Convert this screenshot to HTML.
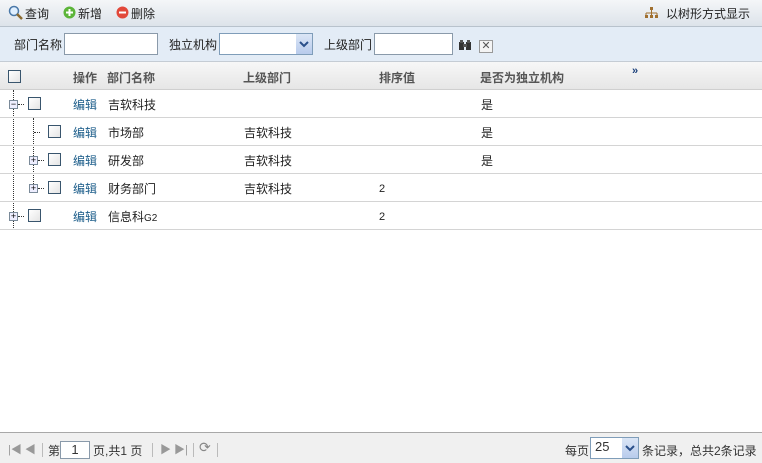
<!DOCTYPE html>
<html><head><meta charset="utf-8"><style>
*{margin:0;padding:0;box-sizing:border-box}
body{width:762px;height:463px;overflow:hidden;background:#fff;font:12px "Liberation Sans","Noto Sans CJK SC",sans-serif;color:#222;position:relative}
.a{position:absolute}
.tb{left:0;top:0;width:762px;height:27px;background:linear-gradient(#f4f6f8,#dde3ea);border-bottom:1px solid #b8c2cc}
.fl{left:0;top:27px;width:762px;height:35px;background:#e3ecf6;border-bottom:1px solid #c5ccd4}
.hd{left:0;top:62px;width:762px;height:28px;background:linear-gradient(#f7f7f7,#e6e6e6);border-bottom:1px solid #cfcfcf;font-weight:bold;color:#555}
.row{left:0;width:762px;height:28px;border-bottom:1px solid #d4d4d4}
.cb{position:absolute;width:13px;height:13px;border:1px solid #39556d;background:linear-gradient(135deg,#fff,#e4e4e4)}
.ed{color:#1c5d8a}
.inp{position:absolute;height:22px;border:1px solid #8a9aaa;background:#fff}
.ft{left:0;top:432px;width:762px;height:31px;background:#f0f0f0;border-top:1px solid #a8a8a8;color:#333}
.vd{position:absolute;border-left:1px dotted #333}
.hd2{position:absolute;border-top:1px dotted #333;width:6px}
.pm{position:absolute;width:9px;height:9px;border:1px solid #7a8a99;background:#eef;font-size:9px;line-height:7px;text-align:center;color:#000}
.sep{position:absolute;top:10px;width:1px;height:14px;background:#bbb}
.num{font-size:11px;line-height:14px}
.sel{position:absolute;right:0;top:0;width:16px;height:20px;background:linear-gradient(#dbe6f6,#b8cbec)}
</style></head><body>
<div class="a tb">
 <svg class="a" style="left:8px;top:5px" width="15" height="15"><circle cx="6" cy="6" r="4.5" fill="#dfefff" stroke="#4a78a8" stroke-width="1.5"/><line x1="9" y1="9" x2="14" y2="14" stroke="#8a6a30" stroke-width="2.5"/></svg>
 <span class="a" style="left:25px;top:5px">查询</span>
 <svg class="a" style="left:63px;top:6px" width="13" height="13"><circle cx="6.5" cy="6.5" r="6" fill="#5cb53a"/><path d="M6.5 3v7M3 6.5h7" stroke="#fff" stroke-width="2"/></svg>
 <span class="a" style="left:78px;top:5px">新增</span>
 <svg class="a" style="left:116px;top:6px" width="13" height="13"><circle cx="6.5" cy="6.5" r="6" fill="#e2483a"/><path d="M3 6.5h7" stroke="#fff" stroke-width="2"/></svg>
 <span class="a" style="left:131px;top:5px">删除</span>
 <svg class="a" style="left:644px;top:6px" width="15" height="13"><rect x="6" y="1" width="3" height="3" fill="#a07030"/><path d="M7.5 4v3M2 7h11M2 7v2M7.5 7v2M13 7v2" stroke="#a07030"/><rect x="1" y="9" width="3" height="3" fill="#a07030"/><rect x="6" y="9" width="3" height="3" fill="#a07030"/><rect x="11" y="9" width="3" height="3" fill="#a07030"/></svg>
 <span class="a" style="left:666px;top:5px">以树形方式显示</span>
</div>
<div class="a fl">
 <span class="a" style="left:14px;top:9px">部门名称</span>
 <div class="inp" style="left:64px;top:6px;width:94px"></div>
 <span class="a" style="left:169px;top:9px">独立机构</span>
 <div class="inp" style="left:219px;top:6px;width:94px;border-color:#7f9db9"><div class="sel"><svg width="16" height="20"><path d="M4 8l4 4 4-4" stroke="#2a4f8a" stroke-width="2" fill="none"/></svg></div></div>
 <span class="a" style="left:324px;top:9px">上级部门</span>
 <div class="inp" style="left:374px;top:6px;width:79px"></div>
 <svg class="a" style="left:459px;top:13px" width="12" height="10"><rect x="0" y="2" width="5" height="8" fill="#333"/><rect x="7" y="2" width="5" height="8" fill="#333"/><rect x="4" y="4" width="4" height="3" fill="#555"/><rect x="1" y="0" width="3" height="3" fill="#555"/><rect x="8" y="0" width="3" height="3" fill="#555"/></svg>
 <div class="a" style="left:479px;top:13px;width:14px;height:13px;border:1px solid #999;background:#f4f4f4;font-size:11px;line-height:11px;text-align:center;color:#555">✕</div>
</div>
<div class="a hd">
 <div class="cb" style="left:8px;top:8px"></div>
 <span class="a" style="left:73px;top:7px">操作</span>
 <span class="a" style="left:107px;top:7px">部门名称</span>
 <span class="a" style="left:243px;top:7px">上级部门</span>
 <span class="a" style="left:379px;top:7px">排序值</span>
 <span class="a" style="left:480px;top:7px">是否为独立机构</span>
 <span class="a" style="left:632px;top:3px;color:#1a3f7a;font-size:11px">»</span>
</div>
<div class="vd" style="left:13px;top:90px;height:140px"></div>
<div class="vd" style="left:33px;top:118px;height:70px"></div>
<div class="a row" style="top:90px">
 <div class="pm" style="left:9px;top:10px">−</div><div class="hd2" style="left:18px;top:14px"></div>
 <div class="cb" style="left:28px;top:7px"></div>
 <span class="a ed" style="left:73px;top:6px">编辑</span><span class="a" style="left:108px;top:6px">吉软科技</span><span class="a" style="left:481px;top:6px">是</span>
</div>
<div class="a row" style="top:118px">
 <div class="hd2" style="left:34px;top:14px"></div>
 <div class="cb" style="left:48px;top:7px"></div>
 <span class="a ed" style="left:73px;top:6px">编辑</span><span class="a" style="left:108px;top:6px">市场部</span><span class="a" style="left:244px;top:6px">吉软科技</span><span class="a" style="left:481px;top:6px">是</span>
</div>
<div class="a row" style="top:146px">
 <div class="pm" style="left:29px;top:10px">+</div><div class="hd2" style="left:38px;top:14px"></div>
 <div class="cb" style="left:48px;top:7px"></div>
 <span class="a ed" style="left:73px;top:6px">编辑</span><span class="a" style="left:108px;top:6px">研发部</span><span class="a" style="left:244px;top:6px">吉软科技</span><span class="a" style="left:481px;top:6px">是</span>
</div>
<div class="a row" style="top:174px">
 <div class="pm" style="left:29px;top:10px">+</div><div class="hd2" style="left:38px;top:14px"></div>
 <div class="cb" style="left:48px;top:7px"></div>
 <span class="a ed" style="left:73px;top:6px">编辑</span><span class="a" style="left:108px;top:6px">财务部门</span><span class="a" style="left:244px;top:6px">吉软科技</span><span class="a num" style="left:379px;top:8px">2</span>
</div>
<div class="a row" style="top:202px">
 <div class="pm" style="left:9px;top:10px">+</div><div class="hd2" style="left:18px;top:14px"></div>
 <div class="cb" style="left:28px;top:7px"></div>
 <span class="a ed" style="left:73px;top:6px">编辑</span><span class="a" style="left:108px;top:6px">信息科<span style="font-size:10px">G2</span></span><span class="a num" style="left:379px;top:8px">2</span>
</div>
<div class="a ft">
 <span class="a" style="left:8px;top:8px;color:#999;font-size:11px">|◀ ◀</span>
 <div class="sep" style="left:42px"></div>
 <span class="a" style="left:48px;top:9px">第</span>
 <div class="inp" style="left:60px;top:8px;width:30px;height:18px;text-align:center;line-height:16px;font-size:13px">1</div>
 <span class="a" style="left:93px;top:9px">页,共1 页</span>
 <div class="sep" style="left:152px"></div>
 <span class="a" style="left:160px;top:8px;color:#999;font-size:11px">▶ ▶|</span>
 <div class="sep" style="left:193px"></div>
 <span class="a" style="left:199px;top:6px;color:#888;font-size:14px">⟳</span>
 <div class="sep" style="left:217px"></div>
 <span class="a" style="left:565px;top:9px">每页</span>
 <div class="inp" style="left:590px;top:4px;width:49px;height:22px;border-color:#7f9db9;font-size:13px;padding-left:4px;line-height:18px">25<div class="sel"><svg width="16" height="20"><path d="M4 8l4 4 4-4" stroke="#2a4f8a" stroke-width="2" fill="none"/></svg></div></div>
 <span class="a" style="left:642px;top:9px">条记录，总共2条记录</span>
</div>
</body></html>
